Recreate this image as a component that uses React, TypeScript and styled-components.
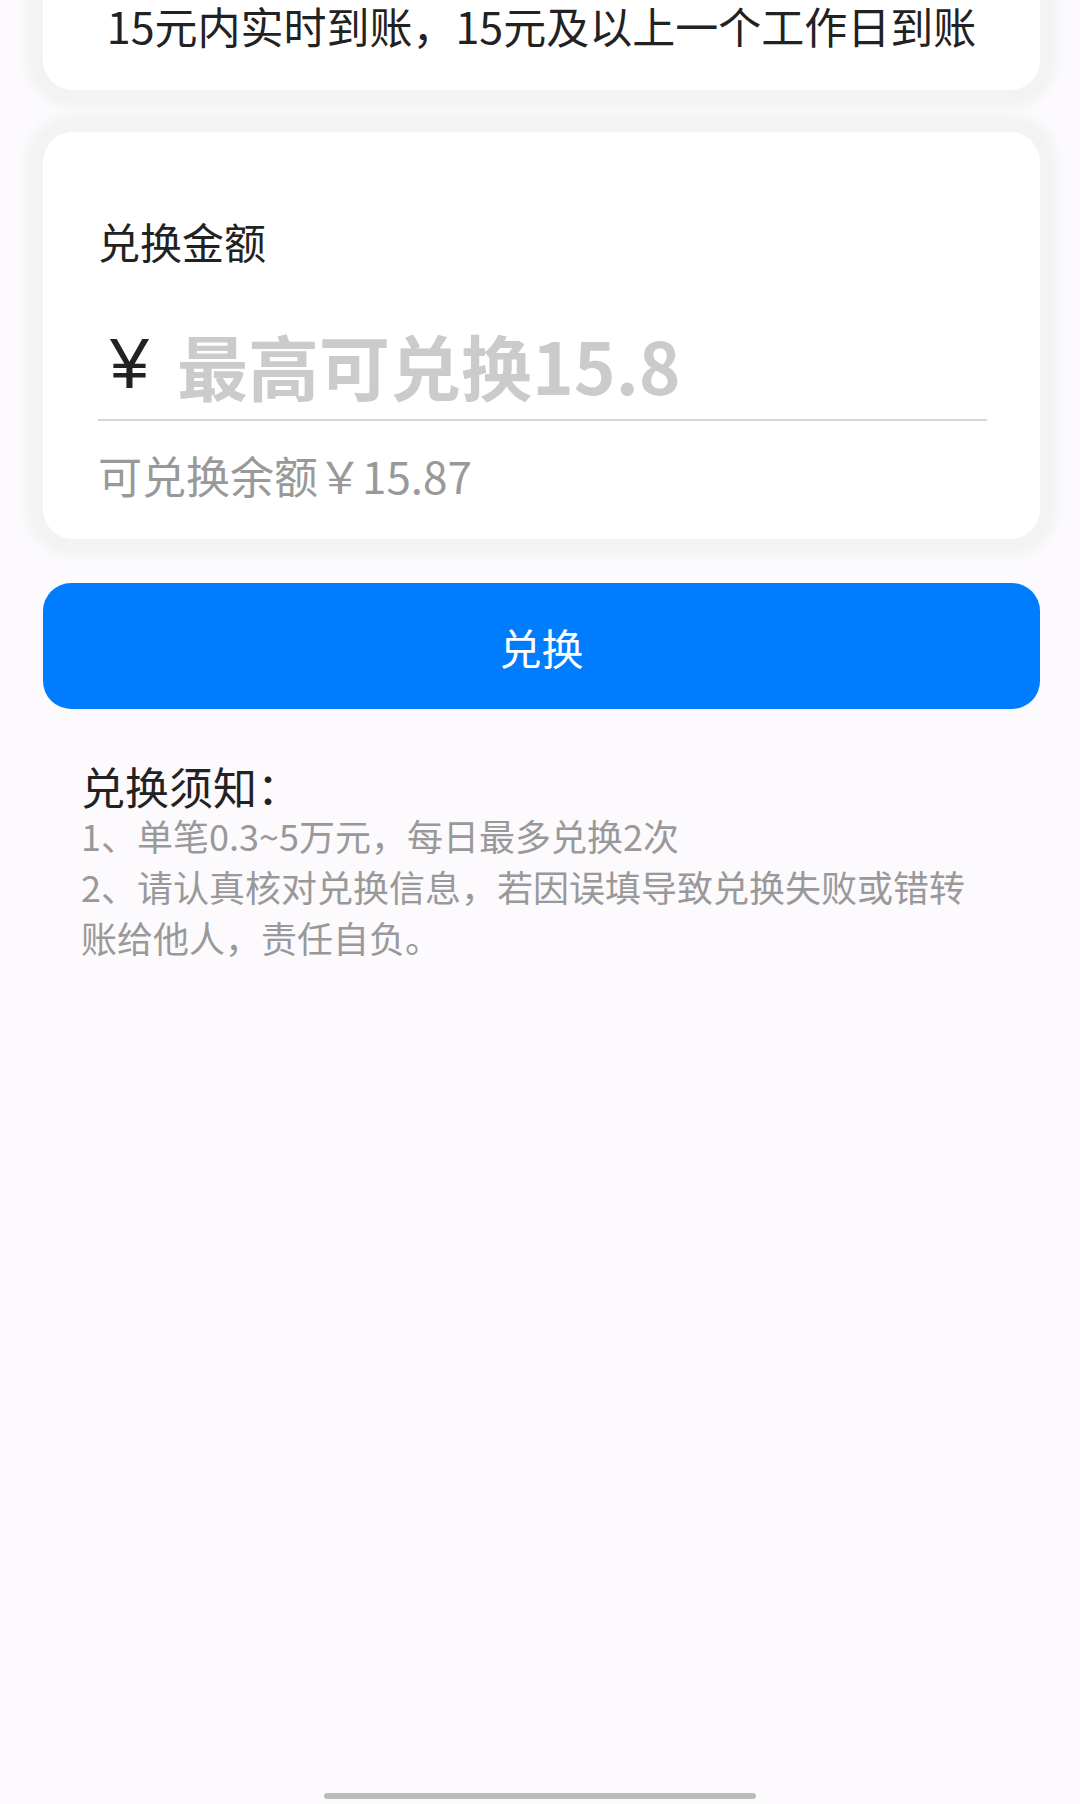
import styled, { createGlobalStyle } from "styled-components";

const GlobalStyle = createGlobalStyle`
    html, body {
        margin: 0;
        padding: 0;
        background: #fcfafd;
    }

    body {
        font-family: "Noto Sans CJK SC", "Noto Sans", sans-serif;
        color: #222;
    }
`

const notices = [
    "1、单笔0.3~5万元，每日最多兑换2次",
    "2、请认真核对兑换信息，若因误填导致兑换失败或错转账给他人，责任自负。",
];

function App() {
    return (
        <Page>
            <GlobalStyle />
            <TipCard>
                <TipText>15元内实时到账，15元及以上一个工作日到账</TipText>
            </TipCard>

            <AmountCard>
                <FieldLabel>兑换金额</FieldLabel>
                <InputRow>
                    <Yen>¥</Yen>
                    <AmountInput placeholder="最高可兑换15.8" />
                </InputRow>
                <Balance>可兑换余额￥15.87</Balance>
            </AmountCard>

            <SubmitButton>兑换</SubmitButton>

            <Notice>
                <NoticeTitle>兑换须知：</NoticeTitle>
                {notices.map((n) => (
                    <NoticeLine key={n}>{n}</NoticeLine>
                ))}
            </Notice>

            <HomeBar />
        </Page>
    )
}

const Page = styled.div`
    display: flex;
    flex-direction: column;
    min-height: 1804px;
    overflow: hidden;
    padding: 0 40px 0 43px;
    box-sizing: border-box;
`

const Card = styled.div`
    background: #fff;
    border-radius: 30px;
    box-shadow: 0 0 10px 18px #f4f3f4;
`

const TipCard = styled(Card)`
    margin-top: -60px;
    padding: 57px 0 37px;
    text-align: center;
`

const TipText = styled.div`
    font-size: 43px;
    line-height: 56px;
    color: #222;
    white-space: nowrap;
`

const AmountCard = styled(Card)`
    margin-top: 42px;
    padding: 81px 53px 36px 55px;
`

const FieldLabel = styled.div`
    font-size: 42px;
    line-height: 56px;
    color: #222;
`

const InputRow = styled.div`
    display: flex;
    align-items: center;
    gap: 28px;
    height: 90px;
    margin-top: 50px;
    padding: 0 0 10px 12px;
    border-bottom: 2px solid #d6d6d6;
`

const Yen = styled.span`
    font-family: "Liberation Sans", "Noto Sans CJK SC", sans-serif;
    font-size: 70px;
    line-height: 90px;
    color: #222;
`

const AmountInput = styled.input`
    flex: 1;
    min-width: 0;
    border: none;
    outline: none;
    background: none;
    padding: 0;
    font-family: "Noto Sans CJK SC", sans-serif;
    font-size: 71px;
    font-weight: 700;
    color: #222;

    &::placeholder {
        color: #cbcbcb;
    }
`

const Balance = styled.div`
    margin-top: 26px;
    font-size: 44px;
    line-height: 56px;
    color: #999;
`

const SubmitButton = styled.button`
    margin-top: 44px;
    height: 126px;
    border: none;
    border-radius: 28px;
    background: #007dff;
    color: #fff;
    font-family: "Noto Sans CJK SC", sans-serif;
    font-size: 42px;
    cursor: pointer;
`

const Notice = styled.div`
    margin-top: 53px;
    padding: 0 40px 0 38px;
    max-width: 900px;
`

const NoticeTitle = styled.div`
    font-size: 44px;
    line-height: 48px;
    color: #222;
`

const NoticeLine = styled.div`
    font-size: 36px;
    line-height: 51px;
    color: #999;
`

const HomeBar = styled.div`
    align-self: center;
    width: 432px;
    height: 6px;
    margin: auto 0 5px -3px;
    border-radius: 3px;
    background: #bcbcbc;
`

export default App;
